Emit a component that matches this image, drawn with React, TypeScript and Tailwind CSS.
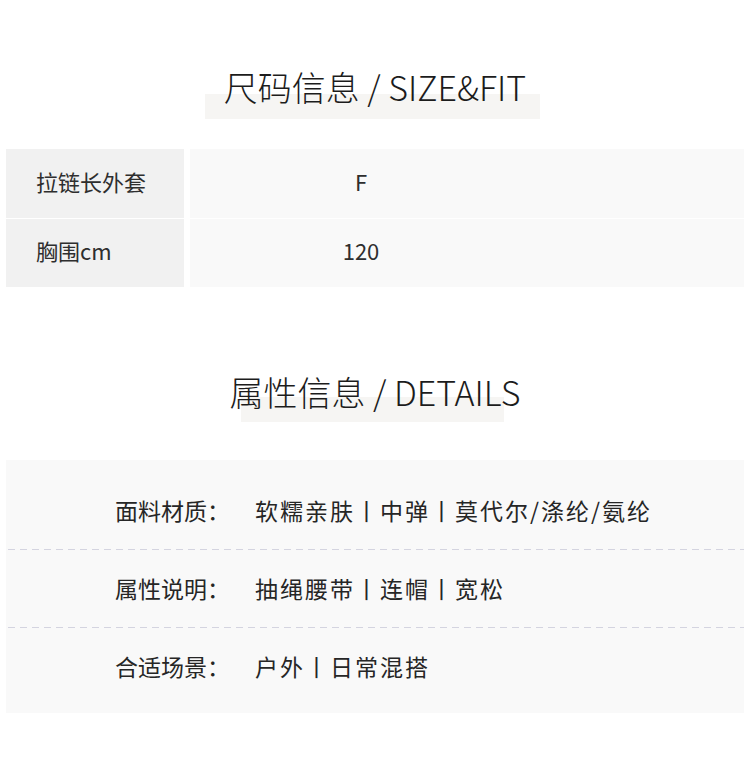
import React from 'react';

const font = 'font-["Noto_Sans_CJK_SC","Noto_Sans",sans-serif]';

const sizes = [
    { label: '拉链长外套', value: 'F', h: 'h-[69px]' },
    { label: '胸围cm', value: '120', h: 'h-[68px]' },
];

const details = [
    { label: '面料材质：', value: '软糯亲肤丨中弹丨莫代尔/涤纶/氨纶' },
    { label: '属性说明：', value: '抽绳腰带丨连帽丨宽松' },
    { label: '合适场景：', value: '户外丨日常混搭' },
];

const SectionTitle: React.FC<{ text: string; barClass: string }> = ({ text, barClass }) => (
    <div className="relative h-[40px] flex items-center justify-center">
        <span className={`absolute h-[25px] bg-[#f6f5f3] ${barClass}`} />
        <h2 className="relative text-[34px] leading-[40px] font-light text-[#1c1c1c] whitespace-nowrap">{text}</h2>
    </div>
);

const App: React.FC = () => {
    return (
        <div className={`w-[750px] h-[765px] bg-white pt-[67px] ${font}`}>
            {/* Size & fit */}
            <SectionTitle text="尺码信息 / SIZE&FIT" barClass="top-[27px] left-[205px] w-[335px]" />

            <div className="mt-[42px] mx-[6px] grid grid-cols-[178px_1fr] gap-x-[6px] gap-y-px">
                {sizes.map((row) => (
                    <React.Fragment key={row.label}>
                        <div className={`${row.h} bg-[#f1f1f1] flex items-center pl-[30px] pb-[5px] text-[22px] text-[#2e2e2e]`}>
                            {row.label}
                        </div>
                        <div className={`${row.h} bg-[#f9f9f9] flex items-center pb-[5px]`}>
                            <div className="w-[342px] text-center text-[22px] text-[#2e2e2e]">{row.value}</div>
                        </div>
                    </React.Fragment>
                ))}
            </div>

            {/* Details */}
            <div className="mt-[85px]">
                <SectionTitle text="属性信息 / DETAILS" barClass="top-[25px] left-[241px] w-[263px]" />
            </div>

            <div className="mt-[48px] mx-[6px] bg-[#f9f9f9] pt-[11px] pb-[8px]">
                {details.map((row, i) => (
                    <div key={row.label}>
                        {i > 0 && (
                            <div className="ml-[2px] h-px bg-[linear-gradient(to_right,#d4d4e0_7px,transparent_7px)] bg-[length:12px_1px]" />
                        )}
                        <div className={`${i === 0 ? 'h-[78px]' : 'h-[77px]'} flex items-center pl-[109px] text-[23px] text-[#262626]`}>
                            <span className="w-[140px] shrink-0">{row.label}</span>
                            <span className="tracking-[2px]">{row.value}</span>
                        </div>
                    </div>
                ))}
            </div>
        </div>
    );
};

export default App;
